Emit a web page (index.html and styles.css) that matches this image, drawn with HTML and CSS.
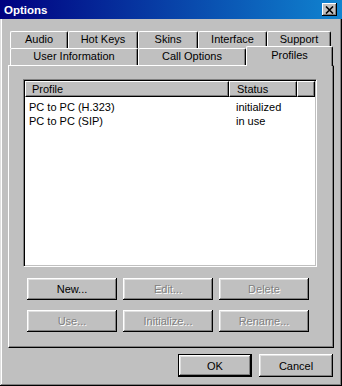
FILE: index.html
```html
<!DOCTYPE html>
<html>
<head>
    <meta charset="utf-8">
    <title>Options</title>
    <link rel="stylesheet" href="styles.css">
</head>
<body>
    <div class="window">
        <div class="titlebar">
            <span class="title">Options</span>
            <span class="close">
                <svg width="9" height="8" viewBox="0 0 9 8">
                    <path d="M1 0.5 L8 7.5 M8 0.5 L1 7.5" stroke="#000" stroke-width="1.6" fill="none"/>
                </svg>
            </span>
        </div>

        <div class="content">
            <div class="tabrow">
                <div class="tab t-audio">Audio</div>
                <div class="tab t-hotkeys">Hot Keys</div>
                <div class="tab t-skins">Skins</div>
                <div class="tab t-interface">Interface</div>
                <div class="tab t-support">Support</div>
            </div>
            <div class="tabrow front">
                <div class="tab t-user">User Information</div>
                <div class="tab t-call">Call Options</div>
                <div class="tab active">Profiles</div>
            </div>

            <div class="panel">
                <div class="listview">
                    <div class="lv-header">
                        <div class="hcell c-profile">Profile</div>
                        <div class="hcell c-status">Status</div>
                        <div class="hcell c-fill"></div>
                    </div>
                    <div class="lv-body">
                        <div class="lv-row">
                            <span class="cell c-profile">PC to PC (H.323)</span>
                            <span class="cell c-status">initialized</span>
                        </div>
                        <div class="lv-row">
                            <span class="cell c-profile">PC to PC (SIP)</span>
                            <span class="cell c-status">in use</span>
                        </div>
                    </div>
                </div>

                <div class="btn-grid">
                    <button class="btn">New...</button>
                    <button class="btn" disabled>Edit...</button>
                    <button class="btn" disabled>Delete</button>
                    <button class="btn" disabled>Use...</button>
                    <button class="btn" disabled>Initialize...</button>
                    <button class="btn" disabled>Rename...</button>
                </div>
            </div>

            <div class="footer">
                <button class="btn wide default">OK</button>
                <button class="btn wide">Cancel</button>
            </div>
        </div>
    </div>
</body>
</html>
```

FILE: styles.css
```css
body {
    margin: 0;
    background: #c0c0c0;
    font-family: "Liberation Sans", Arial, sans-serif;
    font-size: 11px;
    color: #000;
}

.window {
    width: 342px;
    height: 386px;
    box-sizing: border-box;
    padding: 0 2px 2px 2px;
    background: #c0c0c0;
    box-shadow: inset -1px -1px #000, inset 1px 0 #dfdfdf, inset -2px -2px #808080, inset 2px 0 #fff;
}

.titlebar {
    height: 19px;
    margin: 0 -2px 0 -2px;
    padding: 0 5px 0 4px;
    display: flex;
    align-items: center;
    justify-content: space-between;
    background: linear-gradient(to right, #000080, #1084d0);
}

.title {
    color: #fff;
    font-weight: bold;
    font-size: 11.5px;
}

.close {
    width: 15px;
    height: 13px;
    box-sizing: border-box;
    display: flex;
    align-items: center;
    justify-content: center;
    background: #c0c0c0;
    box-shadow: inset -1px -1px #000, inset 1px 1px #fff, inset -2px -2px #808080;
}

.content {
    padding: 12px 6px 0 6px;
}

/* tabs */
.tabrow {
    display: flex;
    margin-left: 2px;
    height: 17px;
}

.tabrow.front {
    position: relative;
    z-index: 1;
}

.tab {
    height: 17px;
    box-sizing: border-box;
    border-top: 1px solid #fff;
    border-left: 1px solid #fff;
    border-right: 1px solid #000;
    border-radius: 2px 2px 0 0;
    box-shadow: inset -1px 0 #808080;
    text-align: center;
    line-height: 15px;
    background: #c0c0c0;
}

.t-audio { width: 58px; }
.t-hotkeys { width: 70px; }
.t-skins { width: 60px; }
.t-interface { width: 69px; }
.t-support { width: 64px; }
.t-user { width: 128px; }
.t-call { width: 108px; }

.tab.active {
    width: 87px;
    height: 20px;
    margin-top: -2px;
    line-height: 16px;
}

/* page */
.panel {
    height: 283px;
    box-sizing: border-box;
    border: 1px solid;
    border-color: #fff #000 #000 #fff;
    box-shadow: inset -1px -1px #808080;
    padding: 13px 0 0 14px;
}

.listview {
    width: 294px;
    height: 188px;
    box-sizing: border-box;
    border: 1px solid;
    border-color: #808080 #fff #fff #808080;
    box-shadow: inset 1px 1px #000, inset -1px -1px #c0c0c0;
    padding: 1px;
    background: #fff;
    display: flex;
    flex-direction: column;
}

.lv-header {
    display: flex;
    height: 16px;
}

.hcell {
    height: 16px;
    box-sizing: border-box;
    background: #c0c0c0;
    border-top: 1px solid #fff;
    border-left: 1px solid #fff;
    border-right: 1px solid #000;
    border-bottom: 1px solid #000;
    box-shadow: inset -1px -1px #808080;
    line-height: 14px;
}

.hcell.c-profile { width: 204px; padding-left: 6px; }
.hcell.c-status { width: 68px; padding-left: 7px; }
.hcell.c-fill { flex: 1; }

.lv-body {
    padding-top: 3px;
}

.lv-row {
    display: flex;
    height: 14px;
    line-height: 14px;
}

.cell.c-profile { width: 200px; padding-left: 4px; }
.cell.c-status { padding-left: 7px; }

/* buttons */
.btn-grid {
    display: grid;
    grid-template-columns: repeat(3, 90px);
    grid-auto-rows: 22px;
    gap: 10px 6px;
    margin: 11px 0 0 4px;
}

.btn {
    font-family: "Liberation Sans", Arial, sans-serif;
    font-size: 11px;
    color: #000;
    background: #c0c0c0;
    border: none;
    padding: 0;
    margin: 0;
    box-shadow: inset -1px -1px #000, inset 1px 1px #fff, inset -2px -2px #808080, inset 2px 2px #dfdfdf;
}

.btn:disabled {
    color: #808080;
    text-shadow: 1px 1px #fff;
}

.footer {
    display: flex;
    justify-content: flex-end;
    gap: 7px;
    margin-top: 6px;
    padding-right: 1px;
}

.btn.wide {
    width: 74px;
    height: 23px;
}

.btn.default {
    border: 1px solid #000;
}
```
